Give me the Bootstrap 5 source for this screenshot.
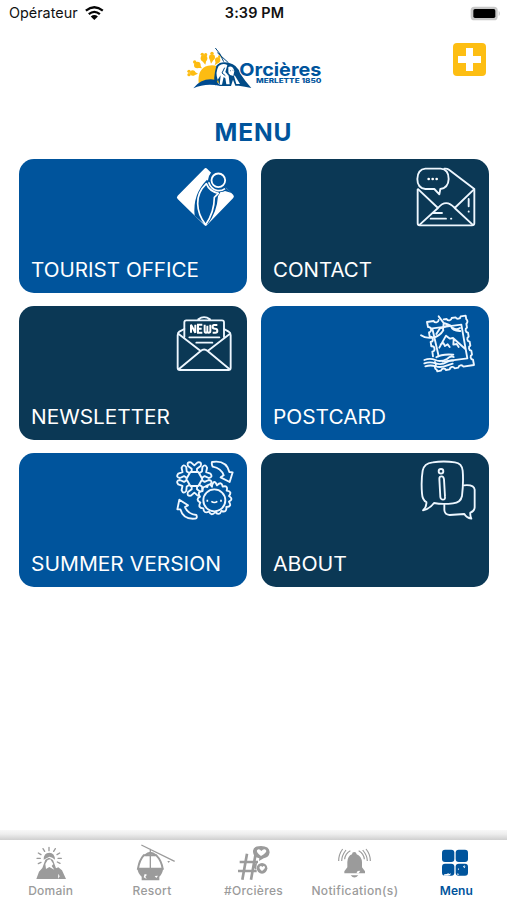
<!DOCTYPE html>
<html lang="en">
<head>
<meta charset="utf-8">
<meta name="viewport" content="width=device-width, initial-scale=1">
<title>Orcières Merlette 1850</title>
<link href="https://cdn.jsdelivr.net/npm/bootstrap@5.3.0/dist/css/bootstrap.min.css" rel="stylesheet">
<style>
:root{--blue:#00549c;--navy:#0b3855;--sun:#fdbc12}
body{font-family:Inter,"Liberation Sans",sans-serif;color:#111;background:#fff}
.screen{height:900px;overflow:hidden}
svg{display:block;overflow:visible;flex:none}
.statusbar{height:28px;font-size:14.4px;padding:0 7px 2px 9px}
.statusbar b{letter-spacing:.15px}
.statusbar>div{flex:1 1 0}
.brandbar{height:76px;padding:12px 21px 0 0}
.brandbar>div{flex:1 1 0}
.logo{margin-left:24px}
.help{width:33px;height:33px;border-radius:4px;background:#fdbe13}
.page-title{font-size:24.5px;line-height:30px;font-weight:700;letter-spacing:.9px;color:var(--blue);margin:13px 0 12.4px}
.tiles{display:grid;grid-template-columns:228px 228px;gap:12.7px 14px;padding:0 19px}
.tile{height:134px;border-radius:15px;padding:6px 12px 9px;color:#fff;text-decoration:none;background:var(--blue)}
.tile.deep{background:var(--navy)}
.tile span{font-size:19.4px;line-height:27px;white-space:nowrap;transform-origin:0 50%}
.ln{fill:none;stroke:#eef7ff;stroke-width:5.6;stroke-linecap:round;stroke-linejoin:round}
.tabs{height:70px;background:linear-gradient(#f8f8f8,#eee 4px,#cfcfcf 10px,#fff 10.5px);padding-top:10px}
.tab{flex:1 1 0;color:#9b9b9b;font-size:12px;font-weight:500;line-height:16px;text-decoration:none;white-space:nowrap}
.tab.on{color:var(--blue);font-weight:600}
</style>
<script src="https://cdn.jsdelivr.net/npm/bootstrap@5.3.0/dist/js/bootstrap.bundle.min.js"></script>
</head>
<body>
<div class="screen d-flex flex-column">
  <header class="statusbar d-flex align-items-center">
    <div class="d-flex align-items-center gap-1"><span>Opérateur</span>
      <svg width="20" height="15" viewBox="250 14 60 46" style="margin-left:2px"><g fill="none" stroke="#050505" stroke-width="7"><path d="M255 31Q281 11 307 31"/><path d="M264 42Q281 28 298 42"/></g><path d="M270 49Q281 41 292 49L281 60Z" fill="#050505"/></svg>
    </div>
    <b class="fw-semibold">3:39 PM</b>
    <div class="d-flex justify-content-end"><svg width="30" height="15" viewBox="1410 17 90 45"><rect x="1412" y="19" width="81" height="41" rx="11" fill="#c8c8c8"/><rect x="1420" y="26" width="66" height="27" rx="5" fill="#000"/><path d="M1496 31q7 8 0 17z" fill="#c8c8c8"/></svg></div>
  </header>
  <div class="brandbar d-flex align-items-start">
    <div></div>
    <svg class="logo" width="150" height="60" viewBox="0 0 450 180" role="img" aria-label="Orcières Merlette 1850">
      <g fill="#fdbc12"><path d="M56 130Q52 85 84 77Q111 71 124 91L116 130Z"/>
      <circle cx="38" cy="99" r="8"/><circle cx="27" cy="94" r="5"/><circle cx="27" cy="104" r="5"/><path d="M40 93l14 8-14 6z"/>
      <circle cx="52" cy="75" r="10"/><circle cx="44" cy="66" r="5"/><path d="M58 72l8 13-16-2z"/>
      <circle cx="72" cy="55" r="10"/><circle cx="67" cy="43" r="5"/><circle cx="77" cy="44" r="5"/><path d="M65 61h14l-3 13z"/>
      <circle cx="96" cy="52" r="9"/><circle cx="96" cy="40" r="5"/><path d="M89 58h13l-9 13z"/>
      <circle cx="113" cy="60" r="8"/><circle cx="118" cy="50" r="4"/><path d="M107 65l12 2-15 9z"/></g>
      <path d="M40 145Q64 113 105 119L122 138Q76 128 40 145Z" fill="#004b91"/>
      <path d="M106 24Q122 40 131 65M112 38L145 68" fill="none" stroke="#064a80" stroke-width="3"/>
      <path d="M109 77Q121 63 146 68Q173 74 180 100Q194 122 214 144Q194 139 176 137L166 137L159 119L153 138L119 138L114 119L106 137Q98 119 109 77Z" fill="#004b87"/>
      <path d="M116 78Q128 68 142 75L136 96L146 107L149 133H139L136 115L131 111L126 134H119L122 106L113 119Q105 97 116 78ZM145 81Q158 76 163 93L160 107Q150 108 145 99ZM161 105L169 132H180L166 109Z" fill="#fff"/>
      <path d="M134 83l-8 16 10 8M151 92l2 1M158 91l2 1M143 84q-5 7 1 14" fill="none" stroke="#004b87" stroke-width="3"/>
      <text x="178" y="107" font-family="Inter,sans-serif" font-size="54" font-weight="700" fill="#00549c" textLength="246" lengthAdjust="spacingAndGlyphs">Orcières</text>
      <text x="228" y="130" font-family="Inter,sans-serif" font-size="18.5" font-weight="800" fill="#00549c" textLength="196" lengthAdjust="spacingAndGlyphs">MERLETTE 1850</text>
    </svg>
    <div class="d-flex justify-content-end" style="padding-top:3px"><a href="#" class="help d-flex align-items-center justify-content-center" aria-label="Emergency"><svg width="23" height="23" viewBox="0 0 23 23"><path d="M8 0h7v8h8v7h-8v8H8v-8H0V8h8z" fill="#fff"/></svg></a></div>
  </div>
  <h1 class="page-title text-center">MENU</h1>
  <main class="tiles">
    <a href="#" class="tile d-flex flex-column justify-content-between">
      <svg class="align-self-end" width="60" height="63.33" viewBox="30 30 180 190">
        <path d="M118 41Q122 37 127 42L205 120Q209 125 204 130L127 209Q122 215 117 209L38 132Q33 127 38 122Z" fill="#fff"/>
        <path d="M138 53L176 92L200 114L180 108Q165 116 140 101Q124 88 138 53Z" fill="#00549c"/>
        <circle cx="160" cy="76" r="31" fill="#00549c"/>
        <path d="M89 182Q82 118 126 74L140 91L167 110L159 124Q156 172 128 208L119 208Z" fill="#00549c"/>
        <circle cx="160" cy="76" r="20.5" fill="none" stroke="#fff" stroke-width="5.5"/>
        <path d="M131 82Q138 104 158 107Q171 108 180 101" fill="none" stroke="#fff" stroke-width="5"/>
        <path d="M124 86Q97 112 98 146Q99 180 122 209Q148 172 148 127L160 115Q133 109 124 86Z" fill="#00549c" stroke="#fff" stroke-width="5" stroke-linejoin="round"/>
      </svg><span data-w="166">TOURIST OFFICE</span></a>
    <a href="#" class="tile deep d-flex flex-column justify-content-between">
      <svg class="align-self-end" width="60" height="63.33" viewBox="36 30 180 190">
        <g class="ln"><path d="M38 103V205Q38 211 44 211H201Q208 211 208 205V102L132 44Q126 40 118 41"/><path d="M40 103L99 159M207 103L149 159M45 208L99 159Q123 130 149 159L202 208M86 174H111M77 191H123M138 191h1M191 132V154M191 169v1"/>
        <path d="M61 41H107Q131 43 131 72Q130 99 106 102L103 118L88 102H61Q37 99 37 72Q38 43 61 41Z" fill="#0b3855"/></g>
        <g fill="#fff"><circle cx="71" cy="72" r="4"/><circle cx="83" cy="72" r="4"/><circle cx="95" cy="72" r="4"/></g>
      </svg><span data-w="97">CONTACT</span></a>
    <a href="#" class="tile deep d-flex flex-column justify-content-between">
      <svg class="align-self-end" width="60" height="63.33" viewBox="30 21 180 190">
        <g class="ln"><path d="M58 72L43 80Q38 83 38 91V188Q38 195 45 195H190Q197 195 197 188V91Q197 83 191 80L177 72M40 86L107 138Q117 129 128 138L195 86M41 193L107 138M194 193L128 138"/><path d="M58 96V52Q58 46 64 46H171Q177 46 177 52V96M100 43Q117 30 135 43M73 97H163M94 113H142"/></g>
        <path d="M78 83V59L91 83V59M112 59H99V83H112M99 71H110M119 59V78Q119 83 123 83Q127 83 127 78V62M127 78Q127 83 131 83Q136 83 136 78V59M157 60H147Q143 60 143 66Q143 71 150 71Q157 71 157 78Q157 83 151 83H143" fill="none" stroke="#fff" stroke-width="6"/>
      </svg><span data-w="137">NEWSLETTER</span></a>
    <a href="#" class="tile d-flex flex-column justify-content-between">
      <svg class="align-self-end" width="60" height="63.33" viewBox="36 21 180 190">
        <g class="ln"><path d="M101 45A8 8 0 0 1 86 48L66 51L69 66A8 8 0 0 1 72 82L74 95A8 8 0 0 1 77 111L79 124A8 8 0 0 1 82 140L84 154M90 171L93 180A8 8 0 0 0 95 194L97 199L108 197A8 8 0 0 1 123 195L134 193A8 8 0 0 1 149 190L160 188A8 8 0 0 1 175 185L207 180L204 164A8 8 0 0 1 201 149L199 137A8 8 0 0 1 196 122L194 110A8 8 0 0 1 191 95L189 83A8 8 0 0 1 186 68L184 56A8 8 0 0 0 184 43L182 32L167 34A8 8 0 0 1 152 37L140 39A8 8 0 0 1 125 42L116 43"/>
        <path d="M77 71L169 59L187 160L112 170M83 75L101 154M103 128L123 92L135 101L144 99L181 132M107 118l8-4 5 9 8-5 6 8M146 104l-1 15 10-2 6 9"/>
        <path d="M101 34L116 54L114 76M115 76Q104 95 83 98Q61 101 48 91M116 54Q127 58 137 62Q143 79 166 78M94 87L104 71L130 61M144 69Q154 77 165 69"/>
        <path d="M58 165Q75 158 91 165T126 162Q137 151 146 156M58 175Q75 169 92 175T126 171Q136 165 145 167M61 184Q77 179 92 184T127 181L143 176M94 157Q110 146 145 149"/></g>
      </svg><span data-w="111">POSTCARD</span></a>
    <a href="#" class="tile d-flex flex-column justify-content-between">
      <svg class="align-self-end" width="60" height="63.33" viewBox="30 27 180 190">
        <g class="ln"><path d="M76 66H100L112 87L100 108H76L64 87Z"/>
        <path id="arm" d="M80 64V56L69 48Q64 35 78 37L88 46L98 37Q112 35 107 48L96 56V64"/>
        <use href="#arm" transform="rotate(60 88 87)"/><use href="#arm" transform="rotate(120 88 87)"/><use href="#arm" transform="rotate(180 88 87)"/><use href="#arm" transform="rotate(240 88 87)"/><use href="#arm" transform="rotate(300 88 87)"/>
        <path d="M141 36Q184 29 193 66L203 67L194 96L167 82L176 76Q169 55 143 50Q139 43 141 36ZM37 178L43 149L69 166L60 171Q68 192 94 195Q98 204 91 206Q55 210 46 178Z"/>
        <path fill="#00549c" d="M141 106q7-20 15 0q14-14 17 4q17-5 12 12q18 2 7 16q15 10 0 17q10 15-8 16q2 18-15 12q-6 16-18 3q-12 14-19-1q-16 7-17-10q-18-1-9-17q-16-9-1-18q-10-15 8-17q-1-17 14-12q4-15 14-1z"/><circle cx="148" cy="151" r="33"/></g>
        <path d="M127 149v6M168 149v6M139 154Q148 161 157 154" fill="none" stroke="#fff" stroke-width="5"/>
      </svg><span data-w="188">SUMMER VERSION</span></a>
    <a href="#" class="tile deep d-flex flex-column justify-content-between">
      <svg class="align-self-end" width="60" height="63.33" viewBox="36 27 180 190">
        <g class="ln"><path d="M177 106Q207 103 209 119V172Q208 184 196 188Q195 198 199 206Q184 203 178 192L134 195Q119 194 118 180V164"/><path d="M83 37Q116 32 150 37Q171 40 173 62Q176 96 171 138Q167 158 144 160Q112 164 87 159Q75 176 54 181Q66 169 64 156Q52 150 51 130Q48 93 53 62Q57 40 83 37Z"/><circle cx="108" cy="64" r="7"/><path d="M103 86Q103 79 110 79Q116 79 117 88L120 140Q121 149 114 149Q107 149 106 141Z"/></g>
      </svg><span data-w="72">ABOUT</span></a>
  </main>
  <nav class="tabs d-flex mt-auto">
    <a href="#" class="tab d-flex flex-column align-items-center"><svg width="34" height="42.5" viewBox="103 31 102 127.5">
      <g fill="#9b9b9b"><path d="M110 148L118 126L128 115L137 90L148 84L160 91L169 116L176 113L187 122L199 148Z"/><path d="M132 90Q132 69 149 69Q165 69 166 90L158 84L149 81Z"/></g><path d="M137 103L144 91L152 89L161 103L156 109L164 120L149 112L139 118Z" fill="#fff"/><path d="M176 132l4 8-5 7z" fill="#fff"/><path d="M148 53v10M130 57l5 8M167 57l-5 8M116 70l8 5M180 70l-8 5M112 86h10M185 86h-10M116 102l8-4M181 101l-8-4" stroke="#9b9b9b" stroke-width="4" stroke-linecap="round"/></svg><span data-w="45">Domain</span></a>
    <a href="#" class="tab d-flex flex-column align-items-center"><svg width="34" height="42.5" viewBox="406 31 102 127.5">
      <g fill="none" stroke="#9b9b9b" stroke-width="4"><path d="M425 46L525 95M452 57V118" /><path d="M437 77Q452 63 468 77" stroke-width="7"/><path d="M432 77H470Q485 92 489 117H415Q419 91 432 77Z" stroke-width="6"/></g><path d="M413 115H491Q488 135 479 141V152H426V141Q415 133 413 115ZM503 94h8l-4 6z" fill="#9b9b9b"/><path d="M435 133l7 2-5 6 4 7-9-5zM465 139l10-1-5 7z" fill="#fff"/></svg><span data-w="39">Resort</span></a>
    <a href="#" class="tab d-flex flex-column align-items-center"><svg width="34" height="42.5" viewBox="709 31 102 127.5">
      <g fill="none" stroke="#9b9b9b" stroke-width="8"><path d="M739 72L725 150M765 72L751 150M717 97H772M712 124H768"/></g><path d="M757 63Q759 49 781 49Q806 49 807 68Q805 84 789 86L775 94L776 86Q756 82 757 63Z" fill="#9b9b9b"/><path d="M781 79Q766 68 769 62Q775 55 782 64Q791 54 797 63Q798 69 781 79Z" fill="#fff"/><circle cx="784" cy="116" r="16" fill="#9b9b9b"/><path d="M784 124Q774 116 777 111Q781 107 785 112Q790 106 793 112Q794 117 784 124Z" fill="#fff"/><path d="M770 93l-13 18 9 10z" fill="#9b9b9b"/></svg><span data-w="59">#Orcières</span></a>
    <a href="#" class="tab d-flex flex-column align-items-center"><svg width="34" height="42.5" viewBox="262 31 102 127.5">
      <path d="M304 74Q304 67 311 67Q317 67 318 74Q333 80 334 98V113L343 125V131H281V125L290 113V97Q291 79 304 74ZM300 137H323Q311 150 300 137Z" fill="#9b9b9b"/><path d="M321 124l8-1-5 8h-7z" fill="#fff"/><path d="M276 58Q264 74 264 94M286 61Q273 78 273 94M299 63Q283 72 282 89M346 58Q359 74 359 94M336 61Q350 78 350 94M324 63Q340 72 341 89" fill="none" stroke="#9b9b9b" stroke-width="3.5"/></svg><span data-w="87">Notification(s)</span></a>
    <a href="#" class="tab on d-flex flex-column align-items-center"><svg width="34" height="42.5" viewBox="570 31 102 127.5">
      <g fill="#00549c"><rect x="579" y="60" width="37" height="37" rx="9"/><rect x="620" y="60" width="37" height="37" rx="9"/><rect x="579" y="102" width="37" height="36" rx="9"/><rect x="620" y="102" width="37" height="36" rx="9"/></g><path d="M586 134l7-1 6-3v4l7-3-3 6-7 1H584zM626 118l4-2-1 6zM642 110l6-3-2 5 4-2-4 6zM625 131l6 3-6 2z" fill="#fff"/></svg><span data-w="33">Menu</span></a>
  </nav>
</div>
<script>
// Fit each label to its set width: tile captions widen their letters, tab captions their spacing.
document.querySelectorAll('[data-w]').forEach(el => {
  const tile = el.parentElement.classList.contains('tile');
  if (tile) el.classList.add('align-self-start');
  const width = el.getBoundingClientRect().width;
  if (tile) el.style.transform = 'scaleX(' + (+el.dataset.w + 2) / width + ')';
  else el.style.letterSpacing = (+el.dataset.w - width) / el.textContent.length + 'px';
});
</script>
</body>
</html>
